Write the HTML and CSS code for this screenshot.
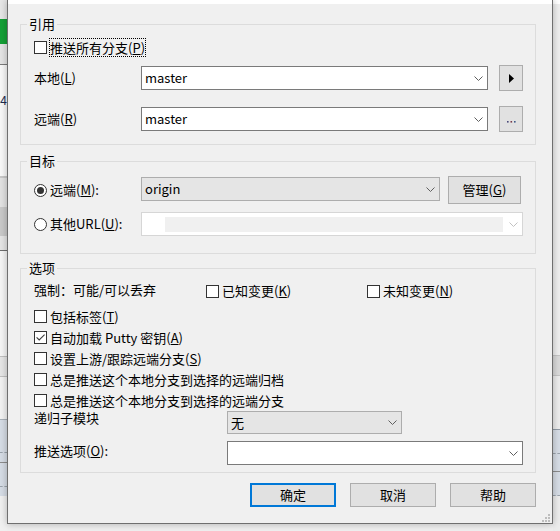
FILE: index.html
```html
<!DOCTYPE html>
<html lang="zh-CN">
<head>
<meta charset="utf-8">
<title>推送</title>
<link rel="stylesheet" href="styles.css">
</head>
<body>
<div class="desk">
  <div class="side">
    <div class="ls1"></div>
    <div class="ls2"></div>
    <div class="ls3"></div>
    <div class="ls4"></div>
    <div class="ls5"><span class="num">64</span></div>
    <div class="ls6"></div>
    <div class="ls7"></div>
    <div class="ls8"></div>
    <div class="ls9"></div>
    <div class="ls10"></div>
    <div class="ls11"></div>
    <div class="ls12"></div>
    <div class="ls13"></div>
    <div class="ls12"></div>
    <div class="ls15"></div>
    <div class="ls16"></div>
    <div class="blue dash h32"></div>
    <div class="blue h9"></div>
    <div class="ls18"></div>
    <div class="blue dash h23"></div>
    <div class="blue h9"></div>
    <div class="ls20"></div>
  </div>

  <div class="dialog">
    <div class="titlebar"></div>
    <div class="dlg-body">

      <fieldset class="group g-ref">
        <legend>引用</legend>
        <div class="gbody">
          <div class="row r-pushall">
            <span class="box"></span>
            <span class="focus">推送所有分支(<u>P</u>)</span>
          </div>
          <div class="row r-ref r-local">
            <span class="lbl w107">本地(<u>L</u>)</span>
            <div class="combo edit w347"><span class="val">master</span><svg class="chev" viewBox="0 0 9 5"><path d="M0.5 0.5 L4.5 4.5 L8.5 0.5" fill="none" stroke="#5f5f5f" stroke-width="1"/></svg></div>
            <button class="btn sq"><svg width="5" height="9" viewBox="0 0 5 9"><path d="M0 0 L5 4.5 L0 9 Z" fill="#000"/></svg></button>
          </div>
          <div class="row r-ref r-remote">
            <span class="lbl w107">远端(<u>R</u>)</span>
            <div class="combo edit w347"><span class="val">master</span><svg class="chev" viewBox="0 0 9 5"><path d="M0.5 0.5 L4.5 4.5 L8.5 0.5" fill="none" stroke="#5f5f5f" stroke-width="1"/></svg></div>
            <button class="btn sq"><svg class="dots" width="9" height="2" viewBox="0 0 9 2"><rect x="0" y="0" width="1.6" height="1.6" fill="#4a4a7a"/><rect x="3.5" y="0" width="1.6" height="1.6" fill="#7a3a4a"/><rect x="7" y="0" width="1.6" height="1.6" fill="#3a5a8a"/></svg></button>
          </div>
        </div>
      </fieldset>

      <fieldset class="group g-tgt">
        <legend>目标</legend>
        <div class="gbody">
          <div class="row r-origin">
            <span class="lbl w107 opt"><span class="radio on"></span><span>远端(<u>M</u>):</span></span>
            <div class="combo list w299"><span class="val">origin</span><svg class="chev" viewBox="0 0 9 5"><path d="M0.5 0.5 L4.5 4.5 L8.5 0.5" fill="none" stroke="#5f5f5f" stroke-width="1"/></svg></div>
            <button class="btn manage">管理(<u>G</u>)</button>
          </div>
          <div class="row r-url">
            <span class="lbl w107 opt"><span class="radio"></span><span>其他URL(<u>U</u>):</span></span>
            <div class="combo dis w382"><span class="field"></span><svg class="chev" viewBox="0 0 9 5"><path d="M0.5 0.5 L4.5 4.5 L8.5 0.5" fill="none" stroke="#c2c2c2" stroke-width="1"/></svg></div>
          </div>
        </div>
      </fieldset>

      <fieldset class="group g-opt">
        <legend>选项</legend>
        <div class="gbody">
          <div class="row r-force">
            <span class="force">强制：可能/可以丢弃</span>
            <span class="opt"><span class="box"></span><span>已知变更(<u>K</u>)</span></span>
            <span class="opt"><span class="box"></span><span>未知变更(<u>N</u>)</span></span>
          </div>
          <div class="row r-chk first"><span class="opt"><span class="box"></span><span>包括标签(<u>T</u>)</span></span></div>
          <div class="row r-chk"><span class="opt"><span class="box"><svg width="11" height="11" viewBox="0 0 11 11"><path d="M1.6 5.4 L4.2 8 L9.6 2.6" fill="none" stroke="#3c3c3c" stroke-width="1.1"/></svg></span><span>自动加载 Putty 密钥(<u>A</u>)</span></span></div>
          <div class="row r-chk"><span class="opt"><span class="box"></span><span>设置上游/跟踪远端分支(<u>S</u>)</span></span></div>
          <div class="row r-chk"><span class="opt"><span class="box"></span><span>总是推送这个本地分支到选择的远端归档</span></span></div>
          <div class="row r-chk"><span class="opt"><span class="box"></span><span>总是推送这个本地分支到选择的远端分支</span></span></div>
          <div class="row r-sub">
            <span class="lbl w193 top">递归子模块</span>
            <div class="combo list w175 h23"><span class="val">无</span><svg class="chev" viewBox="0 0 9 5"><path d="M0.5 0.5 L4.5 4.5 L8.5 0.5" fill="none" stroke="#5f5f5f" stroke-width="1"/></svg></div>
          </div>
          <div class="row r-popt">
            <span class="lbl w193 top2">推送选项(<u>O</u>):</span>
            <div class="combo edit w296"><span class="val"></span><svg class="chev" viewBox="0 0 9 5"><path d="M0.5 0.5 L4.5 4.5 L8.5 0.5" fill="none" stroke="#5f5f5f" stroke-width="1"/></svg></div>
          </div>
        </div>
      </fieldset>

      <div class="actions">
        <button class="btn act default">确定</button>
        <button class="btn act">取消</button>
        <button class="btn act">帮助</button>
      </div>

      <svg class="grip" width="9" height="9" viewBox="0 0 9 9">
        <rect x="7" y="1" width="2" height="2" fill="#bdbdbd"/>
        <rect x="4" y="4" width="2" height="2" fill="#bdbdbd"/>
        <rect x="7" y="4" width="2" height="2" fill="#bdbdbd"/>
        <rect x="1" y="7" width="2" height="2" fill="#bdbdbd"/>
        <rect x="4" y="7" width="2" height="2" fill="#bdbdbd"/>
        <rect x="7" y="7" width="2" height="2" fill="#bdbdbd"/>
      </svg>
    </div>
  </div>

  <div class="side">
    <div class="rs1"></div>
    <div class="rs2"></div>
    <div class="rs3"></div>
    <div class="rs4"></div>
    <div class="rs3"></div>
    <div class="rs6"></div>
    <div class="rs7"></div>
    <div class="blue dash h23"></div>
    <div class="blue h17"></div>
    <div class="ls18"></div>
    <div class="blue dash h23"></div>
    <div class="rs12"></div>
  </div>
</div>
</body>
</html>
```

FILE: styles.css
```css
* { box-sizing: border-box; }
html, body { margin: 0; padding: 0; }
body {
  width: 560px;
  height: 531px;
  overflow: hidden;
  background: #efefef;
  font-family: "Noto Sans CJK SC", "Noto Sans", sans-serif;
  font-size: 13px;
  color: #000;
}
u { text-decoration: underline; text-underline-offset: 1px; }

.desk { display: flex; height: 531px; }

/* background application strips */
.side { width: 7px; flex: none; display: flex; flex-direction: column; overflow: hidden; }
.ls1 { height: 19px; background: #e6e6e6; }
.ls2 { height: 25px; background: #14a036; }
.ls3 { height: 20px; background: #e4e4e4; }
.ls4 { height: 1px; background: #7a7a7a; }
.ls5 { height: 111px; background: #f8f8f8; display: flex; justify-content: flex-end; padding-top: 28px; }
.num { font-size: 12px; line-height: 14px; color: #1d2b4f; white-space: nowrap; }
.ls6 { height: 2px; background: #c8c8c8; }
.ls7 { height: 29px; background: #e2e2e2; }
.ls8 { height: 29px; background: #c9c9c9; }
.ls9 { height: 14px; background: #e5e5e5; }
.ls10 { height: 1px; background: #6e6e6e; }
.ls11 { height: 105px; background: #f5f5f5; }
.ls12 { height: 1px; background: #c0c0c0; }
.ls13 { height: 19px; background: #e6e6e6; }
.ls15 { height: 42px; background: #f2f2f2; }
.ls16 { height: 1px; background: #a8b0b8; }
.ls18 { height: 1px; background: #8c8c8c; }
.ls20 { flex: 1; background: #f0f0f0; }
.blue { background: #d5dce5; flex: none; }
.dash { border-bottom: 1px dashed #9aa2ab; }
.h32 { height: 33px; }
.h23 { height: 24px; }
.h9 { height: 9px; }
.h17 { height: 17px; }
.rs1 { height: 4px; background: #ffffff; }
.rs2 { height: 351px; background: #eeeeee; }
.rs3 { height: 1px; background: #c4c4c4; }
.rs4 { height: 19px; background: #d9d9d9; }
.rs6 { height: 53px; background: #ececec; }
.rs7 { height: 1px; background: #909aa5; }
.rs12 { flex: 1; background: #ececec; }

/* dialog window */
.dialog {
  width: 546px;
  height: 524px;
  flex: none;
  display: flex;
  flex-direction: column;
  background: #f0f0f0;
  border: 1px solid #6f6f6f;
  border-top: 0;
  box-shadow: 0 0 7px rgba(0, 0, 0, 0.28);
  position: relative;
  z-index: 1;
}
.titlebar { height: 4px; flex: none; background: #ffffff; }
.dlg-body { flex: 1; display: flex; flex-direction: column; padding: 0 16px 0 12px; }

/* group boxes */
.group { margin: 0; padding: 0; border: 1px solid #dcdcdc; min-width: 0; flex: none; }
.group legend { margin-left: 6px; padding: 0 2px; line-height: 16px; height: 16px; }
.g-ref { margin-top: 12px; }
.g-ref .gbody { padding: 4px 12px 12px 13px; }
.g-tgt { margin-top: 8px; }
.g-tgt .gbody { padding: 7px 0 17px 13px; }
.g-opt { margin-top: 6px; }
.g-opt .gbody { padding: 5px 0 7px 13px; }

.row { display: flex; align-items: center; }
.lbl { line-height: 16px; flex: none; white-space: nowrap; }
.w107 { width: 107px; }
.w193 { width: 193px; }

.r-pushall { height: 22px; }
.box {
  width: 13px; height: 13px; flex: none;
  border: 1px solid #333333; background: #ffffff;
  display: flex; align-items: center; justify-content: center;
}
.r-pushall .box { margin-right: 2px; }
.focus { border: 1px dotted #000; line-height: 17px; white-space: nowrap; }

.r-ref { height: 26px; }
.r-local { margin-top: 7px; }
.r-remote { margin-top: 15px; }

/* combo boxes */
.combo {
  display: flex; align-items: center; flex: none;
  height: 24px;
  border: 1px solid #7a7a7a;
  background: #ffffff;
  padding: 0 4px 0 3px;
}
.combo .val { flex: 1; line-height: 16px; white-space: nowrap; }
.combo.list { background: #e5e5e5; border-color: #adadad; }
.combo.dis { border-color: #d6d6d6; padding-left: 23px; }
.combo.dis .field { width: 338px; height: 15px; background: #f0f0f0; }
.combo.dis .chev { margin-left: auto; }
.chev { width: 9px; height: 5px; flex: none; }
.w347 { width: 347px; }
.w299 { width: 299px; }
.w382 { width: 382px; }
.w175 { width: 175px; }
.w296 { width: 296px; }
.combo.h23 { height: 23px; }

/* buttons */
.btn {
  font: inherit;
  color: #000;
  line-height: 16px;
  height: 24px;
  padding: 0;
  margin: 0;
  border: 1px solid #adadad;
  background: #e1e1e1;
  display: flex; align-items: center; justify-content: center;
  flex: none;
}
.btn.sq { width: 24px; height: 26px; margin-left: 11px; }
.dots { margin-top: 5px; }
.btn.manage { width: 73px; height: 28px; margin-left: 8px; }
.btn.default { border: 2px solid #0078d7; }

/* radio / check options */
.opt { display: flex; align-items: center; white-space: nowrap; line-height: 16px; }
.opt .box, .opt .radio { margin-right: 3px; }
.radio {
  width: 13px; height: 13px; flex: none;
  border: 1px solid #333333; border-radius: 50%;
  background: #ffffff;
  display: flex; align-items: center; justify-content: center;
}
.radio.on::after { content: ""; width: 7px; height: 7px; border-radius: 50%; background: #333333; }

.r-origin { height: 28px; align-items: flex-start; }
.r-origin .lbl { align-self: center; }
.r-origin .combo { margin-top: 1px; }
.r-url { height: 24px; margin-top: 8px; }

.r-force {
  height: 20px;
  display: grid;
  grid-template-columns: 172px 161px auto;
  align-items: center;
}
.force { line-height: 16px; margin-bottom: 3px; white-space: nowrap; }
.r-chk { height: 21px; }
.r-chk.first { margin-top: 5px; }

.r-sub { height: 23px; align-items: flex-start; }
.r-sub .lbl.top { margin-top: -1px; }
.r-popt { height: 24px; margin-top: 7px; align-items: flex-start; }
.r-popt .lbl.top2 { margin-top: 2px; }

/* dialog buttons */
.actions { display: flex; justify-content: flex-end; gap: 14px; margin-top: 10px; flex: none; }
.btn.act { width: 86px; height: 24px; }

.grip { align-self: flex-end; margin-right: -14px; margin-top: 6px; flex: none; }
```
